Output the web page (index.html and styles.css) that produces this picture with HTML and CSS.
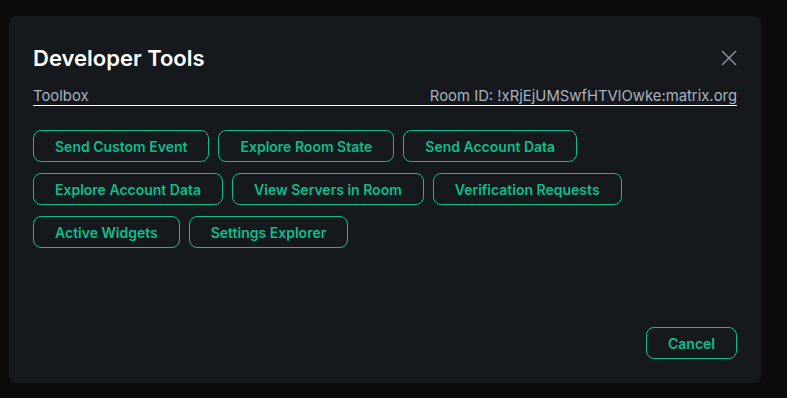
FILE: index.html
```html
<!DOCTYPE html>
<html lang="en">
<head>
  <meta charset="UTF-8">
  <title>Developer Tools</title>
  <link rel="stylesheet" href="styles.css">
</head>
<body>
  <div class="dialog">
    <div class="dialog-header">
      <h2>Developer Tools</h2>
      <button class="close" aria-label="Close">
        <svg width="16" height="16" viewBox="0 0 16 16">
          <path d="M1 1 L15 15 M15 1 L1 15" stroke="#8d97a5" stroke-width="1.4" fill="none"/>
        </svg>
      </button>
    </div>

    <div class="subheader">
      <span>Toolbox</span>
      <span>Room ID: !xRjEjUMSwfHTVlOwke:matrix.org</span>
    </div>

    <div class="tools">
      <button class="btn">Send Custom Event</button>
      <button class="btn">Explore Room State</button>
      <button class="btn">Send Account Data</button>
      <button class="btn">Explore Account Data</button>
      <button class="btn">View Servers in Room</button>
      <button class="btn">Verification Requests</button>
      <button class="btn">Active Widgets</button>
      <button class="btn">Settings Explorer</button>
    </div>

    <div class="footer">
      <button class="btn">Cancel</button>
    </div>
  </div>
</body>
</html>
```

FILE: styles.css
```css
body {
  margin: 0;
  background-color: #0b0c0e;
  font-family: Inter, "Noto Sans", sans-serif;
  color: #ffffff;
}

.dialog {
  margin: 16px 26px 15px 9px;
  height: 367px;
  box-sizing: border-box;
  background-color: #15191e;
  border-radius: 8px;
  padding: 0 24px 24px 24px;
  display: flex;
  flex-direction: column;
}

.dialog-header {
  display: flex;
  justify-content: space-between;
  align-items: center;
  padding-top: 29px;
}

.dialog-header h2 {
  margin: 0;
  font-size: 22px;
  font-weight: 600;
  line-height: 26px;
}

.close {
  background: none;
  border: none;
  padding: 0;
  cursor: pointer;
  display: flex;
}

.subheader {
  display: flex;
  justify-content: space-between;
  margin-top: 16px;
  font-size: 14.85px;
  line-height: 18px;
  color: #a9b2bc;
  border-bottom: 1px solid #ffffff;
}

.tools {
  display: flex;
  flex-wrap: wrap;
  gap: 11px 9px;
  margin-top: 24px;
}

.btn {
  font-family: inherit;
  font-size: 14px;
  font-weight: 600;
  color: #0dbd8b;
  background: none;
  border: 1px solid #0dbd8b;
  border-radius: 8px;
  height: 32px;
  padding: 0 21px;
  cursor: pointer;
}

.footer {
  margin-top: auto;
  display: flex;
  justify-content: flex-end;
}
```
